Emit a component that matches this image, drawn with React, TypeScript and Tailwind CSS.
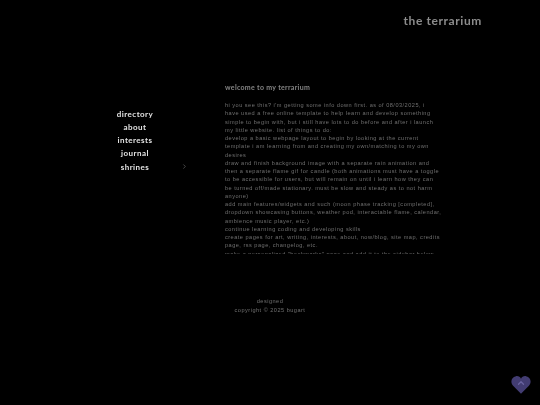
import { ChevronRight, ChevronUp } from 'lucide-react'

const NAV = ['directory', 'about', 'interests', 'journal', 'shrines']

const LINES = [
  "hi you see this? i'm getting some info down first. as of 08/03/2025, i",
  'have used a free online template to help learn and develop something',
  'simple to begin with, but i still have lots to do before and after i launch',
  'my little website. list of things to do:',
  'develop a basic webpage layout to begin by looking at the current',
  'template i am learning from and creating my own/matching to my own',
  'desires',
  'draw and finish background image with a separate rain animation and',
  'then a separate flame gif for candle (both animations must have a toggle',
  'to be accessible for users, but will remain on until i learn how they can',
  'be turned off/made stationary. must be slow and steady as to not harm',
  'anyone)',
  'add main features/widgets and such (moon phase tracking [completed],',
  'dropdown showcasing buttons, weather pod, interactable flame, calendar,',
  'ambience music player, etc.)',
  'continue learning coding and developing skills',
  'create pages for art, writing, interests, about, now/blog, site map, credits',
  'page, rss page, changelog, etc.',
  'make a personalized "bookmarks" page and add it to the sidebar below',
]

export default function App() {
  return (
    <div className="relative h-[405px] w-[540px] overflow-hidden bg-black font-['Liberation_Sans',sans-serif]">
      {/* site title */}
      <header className="flex h-[85px] justify-end pr-[58px] pt-[13px] will-change-transform">
        <h1 className="font-['Lato',sans-serif] text-[12px] font-bold leading-[16px] tracking-[0.6px] text-[#8c8c8c]">the terrarium</h1>
      </header>

      <div className="flex will-change-transform">
        <nav className="flex w-[225px] flex-col pt-[22px]">
          {NAV.map((item) => (
            <div key={item} className="relative flex h-[13.25px] items-center pl-[90px] font-['Lato',sans-serif] text-[8px] font-bold tracking-[0.45px] text-[#e4e4e4]">
              <span className="w-[90px] text-center">{item}</span>
              {item === 'shrines' && <ChevronRight className="absolute left-[181px] top-[3px] h-[7px] w-[7px] text-[#777]" />}
            </div>
          ))}
        </nav>

        <main className="w-[222px]">
          <h2 className="h-[16px] font-['Lato',sans-serif] text-[7px] font-bold leading-[5px] tracking-[0.3px] text-[#858585]">welcome to my terrarium</h2>
          <div className="h-[153px] overflow-hidden">
            {LINES.map((line) => (
              <p key={line} className="whitespace-nowrap text-[5.6px] leading-[8.25px] tracking-[0.48px] text-[#707070]">{line}</p>
            ))}
          </div>
        </main>
      </div>

      <footer className="mt-[43px] flex w-[540px] flex-col items-center text-[5.6px] leading-[9px] tracking-[0.48px] text-[#707070] will-change-transform">
        <span>designed</span>
        <span>copyright © 2025 bugart</span>
      </footer>

      {/* back to top heart */}
      <button className="absolute bottom-[11px] right-[9px] flex h-[19px] w-[20px] items-center justify-center">
        <svg viewBox="0 0 24 22" className="absolute inset-0 h-full w-full" fill="#423c72">
          <path d="M12 22 L2.5 12.5 C-1 8.5 0 2 6 1 C9 0.6 11 2 12 4 C13 2 15 0.6 18 1 C24 2 25 8.5 21.5 12.5 Z" />
        </svg>
        <ChevronUp className="relative mb-[3px] h-[10px] w-[10px] text-[#6a64a0]" strokeWidth={3} />
      </button>
    </div>
  )
}
